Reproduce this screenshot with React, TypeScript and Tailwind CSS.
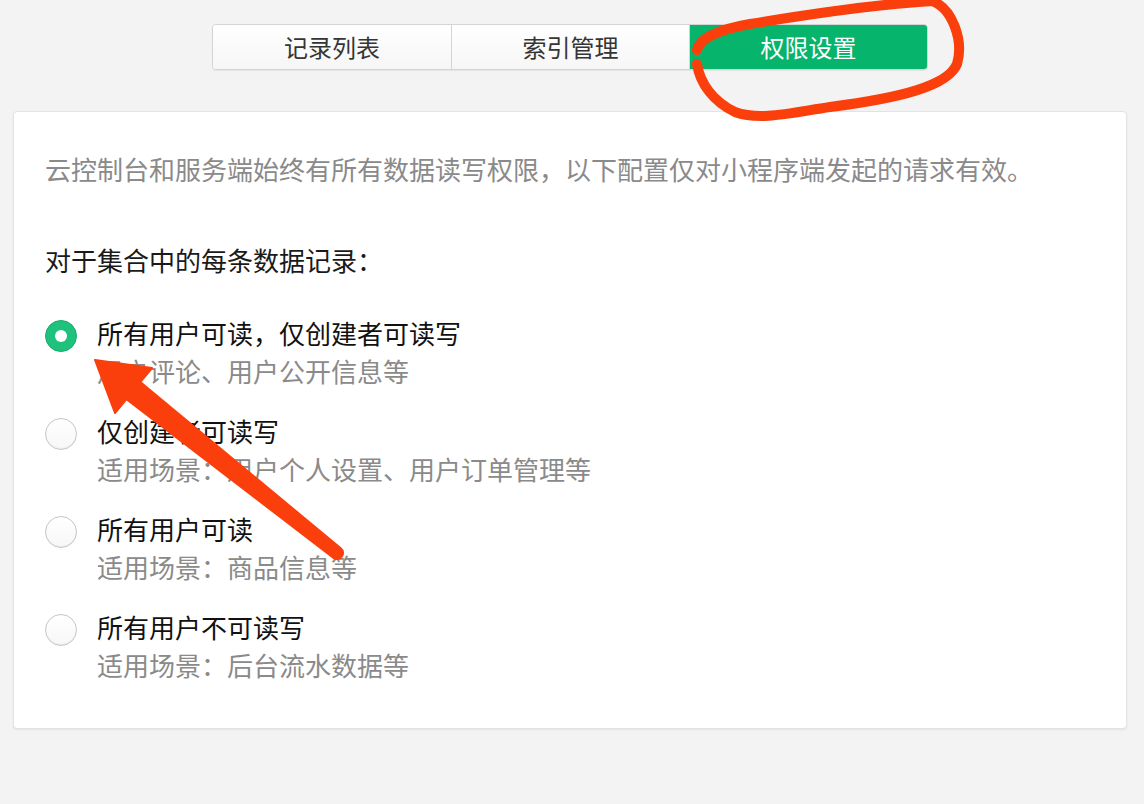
import { useState } from "react";

const options = [
  { title: "所有用户可读，仅创建者可读写", desc: "用户评论、用户公开信息等" },
  { title: "仅创建者可读写", desc: "适用场景：用户个人设置、用户订单管理等" },
  { title: "所有用户可读", desc: "适用场景：商品信息等" },
  { title: "所有用户不可读写", desc: "适用场景：后台流水数据等" },
];

const tabs = ["记录列表", "索引管理", "权限设置"];

export default function App() {
  const [activeTab, setActiveTab] = useState(2);
  const [selected, setSelected] = useState(0);

  return (
    <div
      className="relative min-h-[804px] bg-[#f3f3f3] pl-[13px] pr-[17px] pt-[24px]"
      style={{ fontFamily: '"Noto Sans CJK SC", "Noto Sans", sans-serif' }}
    >
      {/* Tabs */}
      <div className="flex justify-center">
        <div className="flex h-[46px] rounded-[4px] border border-[#d4d4d4] shadow-[0_1px_1px_rgba(0,0,0,0.06)] overflow-hidden">
          {tabs.map((t, i) => (
            <button
              key={t}
              onClick={() => setActiveTab(i)}
              className={`w-[238px] text-[24px] leading-none ${
                i > 0 ? "border-l border-[#d4d4d4]" : ""
              } ${
                activeTab === i
                  ? "bg-[#06b46b] text-white border-[#06b46b]"
                  : "bg-gradient-to-b from-white to-[#f6f6f6] text-[#353535]"
              }`}
            >
              {t}
            </button>
          ))}
        </div>
      </div>

      {/* Card */}
      <div className="mt-[41px] rounded-[4px] border border-[#e3e3e3] bg-white px-[31px] pt-[38px] pb-[44px] shadow-[0_1px_2px_rgba(0,0,0,0.07)]">
        <p className="text-[26px] leading-[38px] text-[#8a8a8a]">
          云控制台和服务端始终有所有数据读写权限，以下配置仅对小程序端发起的请求有效。
        </p>
        <p className="mt-[53px] text-[26px] leading-[38px] text-[#1a1a1a]">对于集合中的每条数据记录：</p>

        <div className="mt-[35px] flex flex-col gap-[22px]">
          {options.map((o, i) => (
            <div key={o.title} className="flex cursor-pointer items-start gap-[20px]" onClick={() => setSelected(i)}>
              <div
                className={`mt-[6px] flex h-[32px] w-[32px] shrink-0 items-center justify-center rounded-full border ${
                  selected === i
                    ? "border-[#1aab6e] bg-[#1ec27c]"
                    : "border-[#c6c6c6] bg-gradient-to-b from-white to-[#f7f7f7] shadow-[inset_0_-1px_1px_rgba(0,0,0,0.05)]"
                }`}
              >
                {selected === i && <div className="h-[12px] w-[12px] rounded-full bg-white" />}
              </div>
              <div className="text-[26px] leading-[38px]">
                <div className="text-[#111]">{o.title}</div>
                <div className="text-[#8a8a8a]">{o.desc}</div>
              </div>
            </div>
          ))}
        </div>
      </div>

      {/* Hand-drawn annotations */}
      <svg className="pointer-events-none absolute left-0 top-0" width="1144" height="804" viewBox="0 0 1144 804">
        <path
          d="M697 50 C699 40 715 30 750 24 C810 14 880 4 932 1 C952 8 964 40 957 64 C948 86 900 98 830 107 C790 113 760 121 735 112 C714 102 700 84 697 64"
          fill="none"
          stroke="#fb3f0c"
          strokeWidth="10"
          strokeLinecap="round"
          strokeLinejoin="round"
        />
        <path
          d="M95 360 L152 368 L140.3 382 L340.75 548.3 A6 6 0 0 1 333.25 557.7 L126.5 399.2 L115 413 Z"
          fill="#fb3f0c"
          stroke="#fb3f0c"
          strokeWidth="2"
          strokeLinejoin="round"
        />
      </svg>
    </div>
  );
}
